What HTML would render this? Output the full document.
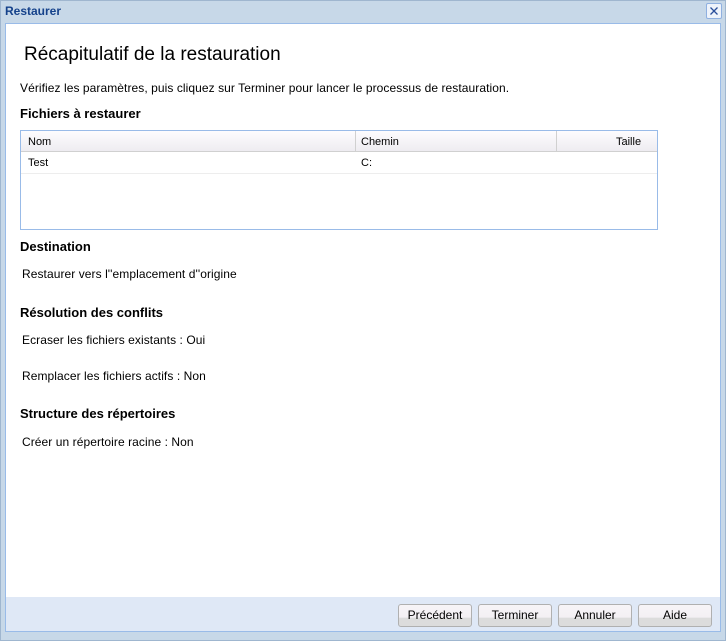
<!DOCTYPE html>
<html><head><meta charset="utf-8"><style>
body{margin:0;width:726px;height:641px;background:#c7d8e8;font-family:"Liberation Sans",sans-serif;font-size:12px;color:#000;position:relative;overflow:hidden}
.a{position:absolute;white-space:nowrap}
#win{position:absolute;left:0;top:0;width:724px;height:639px;border:1px solid #9fb6cf;background:#c7d8e8}
#body{position:absolute;left:5px;top:23px;width:714px;height:574px;background:#fff;border:1px solid #99bbe8;border-bottom:none}
#foot{position:absolute;left:5px;top:597px;width:714px;height:34px;background:#dfe8f6;border:1px solid #99bbe8;border-top:none}
.h{font-weight:bold;font-size:13px}
.t{letter-spacing:0.07px}
.btn{position:absolute;top:604px;width:72px;height:21px;border:1px solid #b0b0b0;border-radius:3px;background:linear-gradient(#f7f4f7 0,#f3f0f4 60%,#dcdcdc 61%,#dcdcdc 100%);text-align:center;line-height:21px;font-size:12px}
</style></head><body>
<div id="win"></div>
<div class="a" style="left:5px;top:4px;font-weight:bold;color:#15428b;font-size:12px">Restaurer</div>
<div class="a" style="left:706px;top:3px;width:14px;height:14px;border:1px solid #8fb0e0;border-radius:2px;background:#eef3fb">
<svg width="14" height="14" style="position:absolute;left:0;top:0"><path d="M3.5 3.5L10.5 10.5M10.5 3.5L3.5 10.5" stroke="#2a4f9b" stroke-width="1.3"/></svg></div>
<div id="body"></div>
<div id="foot"></div>
<div class="a" style="left:24px;top:44px;font-size:19px">Récapitulatif de la restauration</div>
<div class="a t" style="left:20px;top:81px">Vérifiez les paramètres, puis cliquez sur Terminer pour lancer le processus de restauration.</div>
<div class="a h" style="left:20px;top:106px">Fichiers à restaurer</div>
<div class="a" style="left:20px;top:130px;width:636px;height:98px;border:1px solid #99bbe8;background:#fff"></div>
<div class="a" style="left:21px;top:131px;width:636px;height:20px;background:linear-gradient(#fdfcfe,#eeecf1);border-bottom:1px solid #d0d0d0"></div>
<div class="a" style="left:355px;top:131px;width:1px;height:21px;background:#d0d0d0"></div>
<div class="a" style="left:556px;top:131px;width:1px;height:21px;background:#d0d0d0"></div>
<div class="a" style="left:28px;top:136px;font-size:11px">Nom</div>
<div class="a" style="left:361px;top:136px;font-size:11px">Chemin</div>
<div class="a" style="left:616px;top:136px;font-size:11px">Taille</div>
<div class="a" style="left:21px;top:173px;width:636px;height:1px;background:#ededed"></div>
<div class="a" style="left:28px;top:157px;font-size:11px">Test</div>
<div class="a" style="left:361px;top:157px;font-size:11px">C:</div>
<div class="a h" style="left:20px;top:239px">Destination</div>
<div class="a t" style="left:22px;top:267px">Restaurer vers l''emplacement d''origine</div>
<div class="a h" style="left:20px;top:305px">Résolution des conflits</div>
<div class="a t" style="left:22px;top:333px">Ecraser les fichiers existants : Oui</div>
<div class="a t" style="left:22px;top:369px">Remplacer les fichiers actifs : Non</div>
<div class="a h" style="left:20px;top:406px">Structure des répertoires</div>
<div class="a t" style="left:22px;top:435px">Créer un répertoire racine : Non</div>
<div class="btn" style="left:398px">Précédent</div>
<div class="btn" style="left:478px">Terminer</div>
<div class="btn" style="left:558px">Annuler</div>
<div class="btn" style="left:638px">Aide</div>
</body></html>
